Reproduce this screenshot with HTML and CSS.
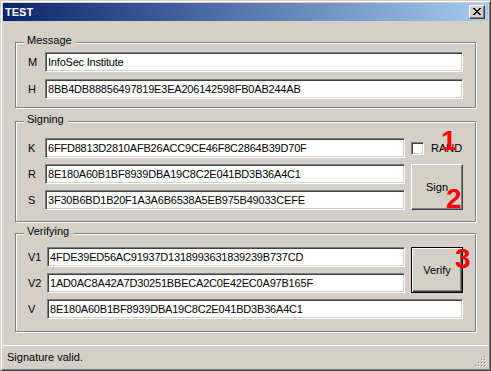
FILE: index.html
```html
<!DOCTYPE html>
<html lang="en">
  <head>
    <meta charset="UTF-8" />
    <meta name="viewport" content="width=device-width, initial-scale=1.0" />
    <title>TEST</title>
    <link rel="stylesheet" href="styles.css">
  </head>
  <body>
    <div class="window">
      <div class="titlebar">
        <span class="title">TEST</span>
        <span class="close-btn">
          <svg width="8" height="7" viewBox="0 0 8 7" shape-rendering="crispEdges">
            <path d="M0 0h2v1H0z M6 0h2v1H6z M1 1h2v1H1z M5 1h2v1H5z M2 2h4v1H2z M3 3h2v1H3z M2 4h4v1H2z M1 5h2v1H1z M5 5h2v1H5z M0 6h2v1H0z M6 6h2v1H6z" fill="#000"/>
          </svg>
        </span>
      </div>

      <div class="client">
        <!-- message + hash -->
        <div class="group group-message">
          <span class="group-label">Message</span>
          <span class="field-label">M</span>
          <div class="textbox wide">InfoSec Institute</div>
          <span class="field-label">H</span>
          <div class="textbox wide">8BB4DB88856497819E3EA206142598FB0AB244AB</div>
        </div>

        <!-- signing -->
        <div class="group group-signing">
          <span class="group-label">Signing</span>
          <span class="field-label">K</span>
          <div class="textbox">6FFD8813D2810AFB26ACC9CE46F8C2864B39D70F</div>
          <label class="checkbox"><span class="check-square"></span>RAND</label>
          <span class="field-label">R</span>
          <div class="textbox">8E180A60B1BF8939DBA19C8C2E041BD3B36A4C1</div>
          <button class="button tall">Sign</button>
          <span class="field-label">S</span>
          <div class="textbox">3F30B6BD1B20F1A3A6B6538A5EB975B49033CEFE</div>
        </div>

        <!-- verifying -->
        <div class="group group-verifying">
          <span class="group-label">Verifying</span>
          <span class="field-label">V1</span>
          <div class="textbox">4FDE39ED56AC91937D1318993631839239B737CD</div>
          <button class="button button-default tall">Verify</button>
          <span class="field-label">V2</span>
          <div class="textbox">1AD0AC8A42A7D30251BBECA2C0E42EC0A97B165F</div>
          <span class="field-label">V</span>
          <div class="textbox wide">8E180A60B1BF8939DBA19C8C2E041BD3B36A4C1</div>
        </div>
      </div>

      <div class="statusbar">
        <span>Signature valid.</span>
        <svg class="grip" width="12" height="12" viewBox="0 0 12 12" shape-rendering="crispEdges">
          <g fill="#fff">
            <rect x="10" y="2" width="1" height="1"/>
            <rect x="7" y="5" width="1" height="1"/><rect x="10" y="5" width="1" height="1"/>
            <rect x="4" y="8" width="1" height="1"/><rect x="7" y="8" width="1" height="1"/><rect x="10" y="8" width="1" height="1"/>
            <rect x="1" y="11" width="1" height="1"/><rect x="4" y="11" width="1" height="1"/><rect x="7" y="11" width="1" height="1"/><rect x="10" y="11" width="1" height="1"/>
          </g>
          <g fill="#808080">
            <rect x="9" y="1" width="1" height="1"/>
            <rect x="6" y="4" width="1" height="1"/><rect x="9" y="4" width="1" height="1"/>
            <rect x="3" y="7" width="1" height="1"/><rect x="6" y="7" width="1" height="1"/><rect x="9" y="7" width="1" height="1"/>
            <rect x="0" y="10" width="1" height="1"/><rect x="3" y="10" width="1" height="1"/><rect x="6" y="10" width="1" height="1"/><rect x="9" y="10" width="1" height="1"/>
          </g>
        </svg>
      </div>

      <!-- red step numbers drawn over the form -->
      <span class="step step-1">1</span>
      <span class="step step-2">2</span>
      <span class="step step-3">3</span>
    </div>
  </body>
</html>
```

FILE: styles.css
```css
html {
  font-family: "Liberation Sans", Arial, sans-serif;
  font-size: 11px;
  line-height: 13px;
}

body {
  margin: 0;
  padding: 0;
  background: #d4d0c8;
}

.window {
  position: relative;
  box-sizing: border-box;
  width: 491px;
  height: 371px;
  display: flex;
  flex-direction: column;
  padding: 2px;
  background: #d4d0c8;
  border: 1px solid;
  border-color: #d4d0c8 #404040 #404040 #d4d0c8;
  box-shadow: inset 1px 1px #fff, inset -1px -1px #808080;
  color: #000;
}

/* title bar */
.titlebar {
  height: 18px;
  flex: none;
  display: flex;
  align-items: center;
  justify-content: space-between;
  padding: 0 3px 0 2px;
  background: linear-gradient(to right, #0a246a, #a6caf0);
}

.title {
  color: #fff;
  font-weight: bold;
}

.close-btn {
  box-sizing: border-box;
  width: 16px;
  height: 14px;
  display: flex;
  align-items: center;
  justify-content: center;
  padding: 0 1px 1px 0;
  background: #d4d0c8;
  border: 1px solid;
  border-color: #fff #404040 #404040 #fff;
  box-shadow: inset -1px -1px #808080;
}

/* form area */
.client {
  flex: 1;
  padding: 21px 12px 0 12px;
}

.group {
  position: relative;
  display: grid;
  grid-template-columns: 11px 1fr 52px;
  grid-auto-rows: 20px;
  column-gap: 6px;
  row-gap: 6px;
  padding: 16px 12px 11px 12px;
  border: 1px solid #808080;
  box-shadow: inset 1px 1px #fff, 1px 1px #fff;
}

.group-message {
  row-gap: 7px;
  padding-top: 9px;
  padding-bottom: 8px;
}

.group-signing {
  margin-top: 13px;
}

.group-verifying {
  margin-top: 11px;
  grid-template-columns: 13px 1fr 52px;
  padding-top: 13px;
  padding-bottom: 12px;
}

.group-label {
  position: absolute;
  top: -9px;
  left: 8px;
  padding: 0 4px 0 3px;
  background: #d4d0c8;
}

.field-label {
  align-self: center;
  white-space: nowrap;
}

.textbox {
  display: flex;
  align-items: center;
  padding: 0 2px;
  background: #fff;
  border: 1px solid;
  border-color: #808080 #fff #fff #808080;
  box-shadow: inset 1px 1px #404040, inset -1px -1px #d4d0c8;
  letter-spacing: -0.2px;
  white-space: nowrap;
  overflow: hidden;
}

.textbox.wide {
  grid-column: 2 / span 2;
}

.checkbox {
  display: flex;
  align-items: center;
  gap: 7px;
  white-space: nowrap;
}

.check-square {
  box-sizing: border-box;
  width: 13px;
  height: 13px;
  background: #fff;
  border: 1px solid;
  border-color: #808080 #fff #fff #808080;
  box-shadow: inset 1px 1px #404040, inset -1px -1px #d4d0c8;
}

.button {
  font: inherit;
  color: #000;
  padding: 0;
  margin: 0;
  background: #d4d0c8;
  border: 1px solid;
  border-color: #fff #404040 #404040 #fff;
  box-shadow: inset -1px -1px #808080;
}

.button.tall {
  grid-column: 3;
  grid-row: span 2;
}

.group-signing .button.tall {
  grid-row: 2 / span 2;
}

.group-verifying .button.tall {
  grid-row: 1 / span 2;
}

.button-default {
  border-color: #000;
  box-shadow: inset 1px 1px #fff, inset -1px -1px #404040, inset -2px -2px #808080;
}

/* status bar */
.statusbar {
  flex: none;
  position: relative;
  box-sizing: border-box;
  height: 23px;
  border-top: 1px solid #fff;
  padding: 5px 0 0 4px;
}

.grip {
  position: absolute;
  right: 1px;
  bottom: 1px;
}

/* red annotations */
.step {
  position: absolute;
  font-family: "Liberation Sans", Arial, sans-serif;
  font-weight: bold;
  font-size: 28px;
  line-height: 28px;
  color: #f00;
}

.step-1 {
  left: 440px;
  top: 126px;
}

.step-2 {
  left: 445px;
  top: 184px;
}

.step-3 {
  left: 454px;
  top: 244px;
}
```
